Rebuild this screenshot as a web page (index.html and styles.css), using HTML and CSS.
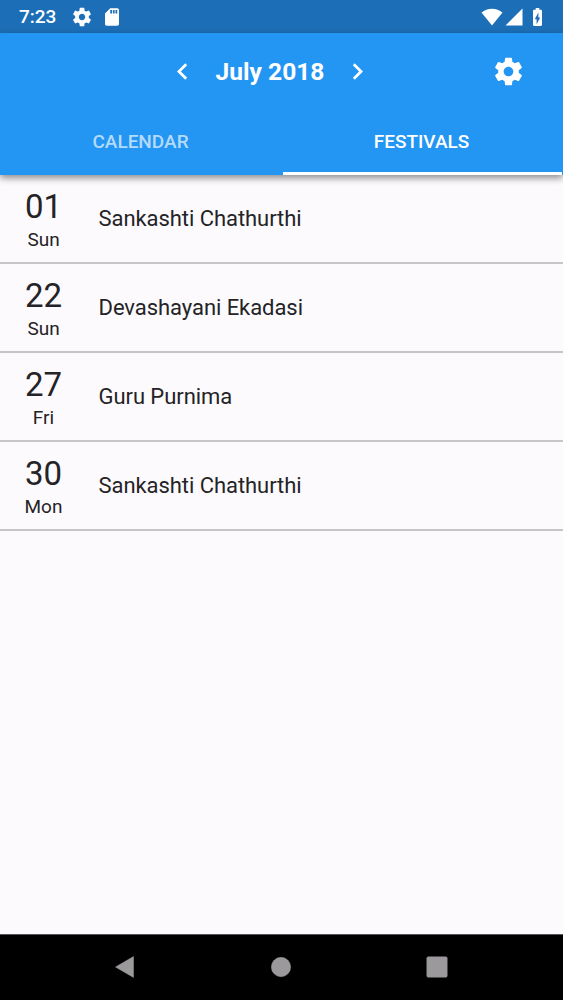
FILE: index.html
```
<!DOCTYPE html>
<html lang="en">

<head>
    <meta charset="UTF-8">
    <meta name="viewport" content="width=device-width, initial-scale=1.0">
    <title>Festivals</title>
    <link rel="stylesheet" href="styles.css">
</head>

<body>
    <div class="status-bar">
        <span class="time">7:23</span>
        <svg class="status-gear" viewBox="0 0 24 24"><path d="M19.43 12.98c.04-.32.07-.64.07-.98s-.03-.66-.07-.98l2.11-1.65c.19-.15.24-.42.12-.64l-2-3.46c-.12-.22-.39-.3-.61-.22l-2.49 1c-.52-.4-1.08-.73-1.69-.98l-.38-2.65C14.46 2.18 14.25 2 14 2h-4c-.25 0-.46.18-.49.42l-.38 2.65c-.61.25-1.17.59-1.69.98l-2.49-1c-.23-.09-.49 0-.61.22l-2 3.46c-.13.22-.07.49.12.64l2.11 1.65c-.04.32-.07.65-.07.98s.03.66.07.98l-2.11 1.65c-.19.15-.24.42-.12.64l2 3.46c.12.22.39.3.61.22l2.49-1c.52.4 1.08.73 1.69.98l.38 2.65c.03.24.24.42.49.42h4c.25 0 .46-.18.49-.42l.38-2.65c.61-.25 1.17-.59 1.69-.98l2.49 1c.23.09.49 0 .61-.22l2-3.46c.12-.22.07-.49-.12-.64l-2.11-1.65zM12 15.5c-1.93 0-3.5-1.57-3.5-3.5s1.57-3.5 3.5-3.5 3.5 1.57 3.5 3.5-1.57 3.5-3.5 3.5z"/></svg>
        <svg class="sd-card" viewBox="4 2 16 20"><path d="M18 2h-8L4.02 8 4 20c0 1.100.9 2 2 2h12c1.100 0 2-.9 2-2V4c0-1.100-.9-2-2-2zm-6 6h-2V4h2v4zm3 0h-2V4h2v4zm3 0h-2V4h2v4z"/></svg>
        <svg class="wifi" viewBox="0 0 22 18"><path d="M11 17.500 0.500 4.500C3.500 2 7 0.700 11 0.700s7.500 1.300 10.500 3.800z"/></svg>
        <svg class="signal" viewBox="0 0 18 18"><path d="M0.500 17.500h17V0.500z"/></svg>
        <svg class="battery" viewBox="7 2 10 20"><path d="M15.670 4H14V2h-4v2H8.330C7.600 4 7 4.600 7 5.330v15.330C7 21.400 7.600 22 8.330 22h7.330c.74 0 1.340-.6 1.340-1.330V5.330C17 4.600 16.400 4 15.670 4zM11 20v-5.500H9L13 7v5.500h2L11 20z"/></svg>
    </div>

    <header class="app-bar">
        <div class="toolbar">
            <svg class="arrow" viewBox="0 0 24 24"><path d="M15.410 7.410 14 6l-6 6 6 6 1.410-1.410L10.830 12z"/></svg>
            <h1 class="month">July 2018</h1>
            <svg class="arrow" viewBox="0 0 24 24"><path d="M10 6 8.590 7.410 13.170 12l-4.580 4.590L10 18l6-6z"/></svg>
            <svg class="settings" viewBox="0 0 24 24"><path d="M19.43 12.98c.04-.32.07-.64.07-.98s-.03-.66-.07-.98l2.11-1.65c.19-.15.24-.42.12-.64l-2-3.46c-.12-.22-.39-.3-.61-.22l-2.49 1c-.52-.4-1.08-.73-1.69-.98l-.38-2.65C14.46 2.18 14.25 2 14 2h-4c-.25 0-.46.18-.49.42l-.38 2.65c-.61.25-1.17.59-1.69.98l-2.49-1c-.23-.09-.49 0-.61.22l-2 3.46c-.13.22-.07.49.12.64l2.11 1.65c-.04.32-.07.65-.07.98s.03.66.07.98l-2.11 1.65c-.19.15-.24.42-.12.64l2 3.46c.12.22.39.3.61.22l2.49-1c.52.4 1.08.73 1.69.98l.38 2.65c.03.24.24.42.49.42h4c.25 0 .46-.18.49-.42l.38-2.65c.61-.25 1.17-.59 1.69-.98l2.49 1c.23.09.49 0 .61-.22l2-3.46c.12-.22.07-.49-.12-.64l-2.11-1.65zM12 15.5c-1.93 0-3.5-1.57-3.5-3.5s1.57-3.5 3.5-3.5 3.5 1.57 3.5 3.5-1.57 3.5-3.5 3.5z"/></svg>
        </div>
        <nav class="tabs">
            <div class="tab">CALENDAR</div>
            <div class="tab active">FESTIVALS</div>
        </nav>
    </header>

    <main class="festivals">
        <div class="row">
            <div class="date"><span class="day">01</span><span class="weekday">Sun</span></div>
            <div class="name">Sankashti Chathurthi</div>
        </div>
        <div class="row">
            <div class="date"><span class="day">22</span><span class="weekday">Sun</span></div>
            <div class="name">Devashayani Ekadasi</div>
        </div>
        <div class="row">
            <div class="date"><span class="day">27</span><span class="weekday">Fri</span></div>
            <div class="name">Guru Purnima</div>
        </div>
        <div class="row">
            <div class="date"><span class="day">30</span><span class="weekday">Mon</span></div>
            <div class="name">Sankashti Chathurthi</div>
        </div>
    </main>

    <footer class="nav-bar">
        <svg viewBox="0 0 24 24"><path d="M2.500 12 20.500 1.500v21z" stroke-linejoin="round"/></svg>
        <svg viewBox="0 0 24 24"><circle cx="12" cy="12" r="9.700"/></svg>
        <svg viewBox="0 0 24 24"><rect x="1.800" y="1.800" width="20.400" height="20.400" rx="1.500"/></svg>
    </footer>
</body>

</html>
```
FILE: styles.css
```
* {
    box-sizing: border-box;
}

body {
    display: flex;
    flex-direction: column;
    height: 1000px;
    margin: 0;
    font-family: Roboto, sans-serif;
    color: #242326;
    background-color: #fcfafd;
    overflow: hidden;
}

svg {
    display: block;
    flex: none;
    fill: #ffffff;
}

.status-bar {
    display: flex;
    align-items: center;
    height: 33px;
    padding: 0 19px;
    background-color: #1c6fb7;
    color: #ffffff;
}

.time {
    width: 52px;
    font-size: 19px;
    font-weight: 500;
}

.status-gear {
    width: 22px;
    height: 22px;
}

.sd-card {
    width: 14px;
    height: 18px;
    margin-left: 12px;
}

.wifi {
    width: 22px;
    height: 18px;
    margin-left: auto;
}

.signal {
    width: 18px;
    height: 18px;
    margin-left: 2px;
}

.battery {
    width: 11px;
    height: 18px;
    margin-left: 9px;
    margin-right: 1px;
}

.app-bar {
    height: 142px;
    background-color: #2395f3;
    color: #ffffff;
    box-shadow: 0 3px 7px rgba(0, 0, 0, 0.45);
    z-index: 1;
}

.toolbar {
    display: flex;
    align-items: center;
    height: 77px;
    padding: 0 38px 0 166px;
}

.arrow {
    width: 33px;
    height: 33px;
}

.month {
    width: 142px;
    margin: 0;
    font-size: 24.600px;
    font-weight: 700;
    text-align: center;
    white-space: nowrap;
}

.settings {
    width: 33px;
    height: 33px;
    margin-left: auto;
}

.tabs {
    display: flex;
    height: 65px;
    padding-right: 1px;
}

.tab {
    flex: 1;
    padding-top: 21px;
    padding-right: 2px;
    font-size: 19px;
    line-height: 22px;
    font-weight: 500;
    text-align: center;
    color: #b4dbfb;
}

.tab.active {
    flex: none;
    width: 279px;
    color: #ffffff;
    border-bottom: 3px solid #ffffff;
}

.festivals {
    flex: 1;
}

.row {
    display: flex;
    height: 88.900px;
    border-bottom: 2px solid #c6c5c8;
}

.date {
    display: flex;
    flex-direction: column;
    align-items: center;
    width: 87px;
    padding-top: 12px;
}

.day {
    font-size: 33px;
    line-height: 39px;
}

.weekday {
    font-size: 19px;
    line-height: 28px;
}

.name {
    align-self: center;
    padding-top: 1px;
    padding-left: 11.500px;
    font-size: 22px;
    letter-spacing: -0.060px;
}

.nav-bar {
    display: flex;
    justify-content: center;
    align-items: center;
    gap: 132px;
    height: 66px;
    padding: 0 2px 2px 0;
    background-color: #000000;
    border-top: 1px solid #555555;
}

.nav-bar svg {
    width: 24px;
    height: 24px;
    fill: #9b999c;
    stroke: #9b999c;
    stroke-width: 0.500px;
}
```
